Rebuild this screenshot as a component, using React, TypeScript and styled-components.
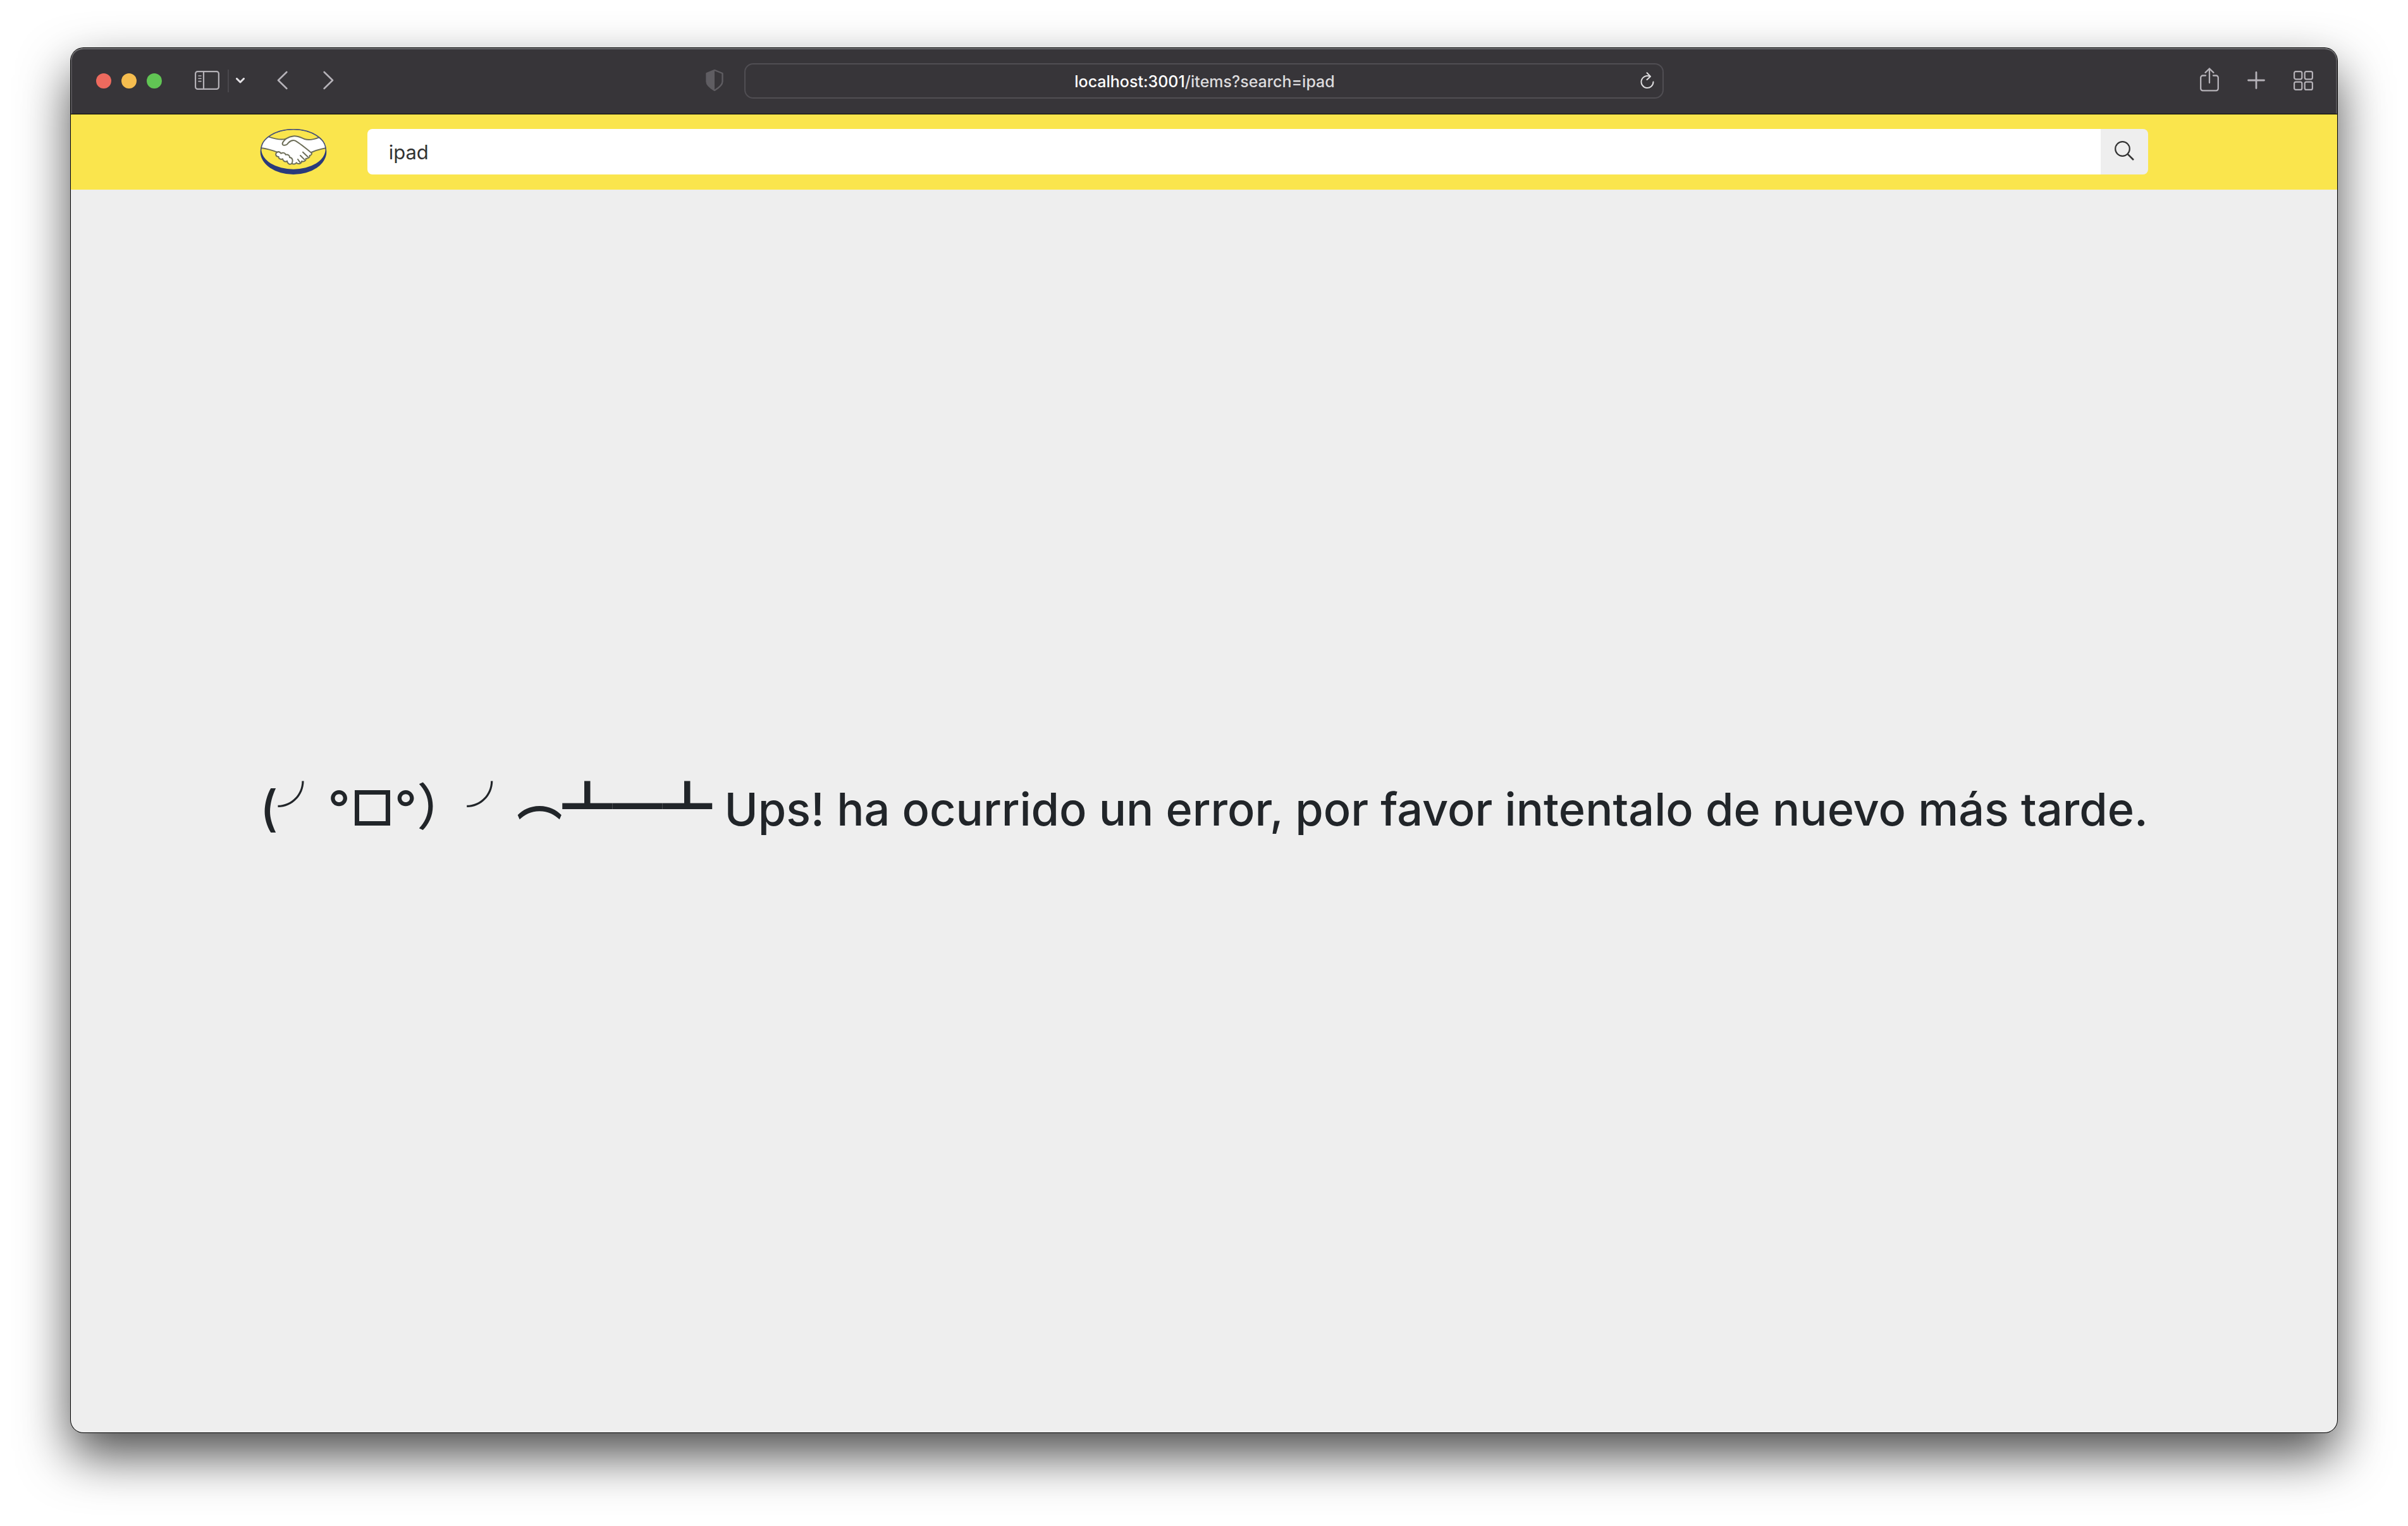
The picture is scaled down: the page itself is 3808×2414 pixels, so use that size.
import React, { useState } from "react";
import styled, { createGlobalStyle } from "styled-components";

const GlobalStyle = createGlobalStyle`
  *, *::before, *::after { box-sizing: border-box; }
  body {
    margin: 0;
    background: #ffffff;
    font-family: Inter, "Liberation Sans", "Noto Sans CJK JP", sans-serif;
  }
`;

const Desktop = styled.div`
  display: flex;
  min-height: 100vh;
  padding: 76px 112px 148px;
`;

const BrowserWindow = styled.div`
  flex: 1;
  min-width: 0;
  display: flex;
  flex-direction: column;
  overflow: hidden;
  border-radius: 20px;
  background: #eeeeee;
  box-shadow: 0 0 0 1px #000000, 0 36px 80px rgba(0, 0, 0, 0.7);
`;

const Toolbar = styled.div`
  display: grid;
  grid-template-columns: 1fr 1454px 1fr;
  align-items: center;
  height: 105px;
  background: #373539;
  border-bottom: 1px solid #000000;
  border-radius: 20px 20px 0 0;
  box-shadow: inset 0 2px 0 #6d6c6f, inset 2px 0 0 #565458, inset -2px 0 0 #565458;
`;

const ToolGroup = styled.div<{ $end?: boolean }>`
  display: flex;
  align-items: center;
  justify-content: ${(p) => (p.$end ? "flex-end" : "flex-start")};
  gap: ${(p) => (p.$end ? "45px" : "0")};
  padding: ${(p) => (p.$end ? "0 38px 0 0" : "0 33px 0 40px")};
`;

const Lights = styled.div`
  display: flex;
  gap: 16px;
  margin-right: 52px;
`;

const Light = styled.button<{ $color: string }>`
  width: 24px;
  height: 24px;
  padding: 0;
  border: 0;
  border-radius: 50%;
  background: ${(p) => p.$color};
`;

const ToolButton = styled.button<{ $tone?: string; $push?: boolean }>`
  display: flex;
  padding: 0 0 2px;
  border: 0;
  background: none;
  color: ${(p) => p.$tone ?? "#b5b2b8"};
  margin-left: ${(p) => (p.$push ? "auto" : "0")};
  svg { display: block; }
`;

const Divider = styled.span`
  width: 2px;
  height: 36px;
  margin: 0 11px 0 13px;
  background: #49474c;
`;

const NavButtons = styled.div`
  display: flex;
  gap: 56px;
  margin-left: 51px;
`;

const AddressBar = styled.div`
  display: grid;
  grid-template-columns: 48px 1fr 48px;
  align-items: center;
  height: 56px;
  border: 2px solid #504e53;
  border-radius: 14px;
  button { grid-column: 3; justify-self: center; }
`;

const Url = styled.div`
  grid-column: 2;
  padding: 2px 0 0 2px;
  text-align: center;
  font-size: 25px;
  line-height: 32px;
  font-weight: 500;
  color: #dddcde;
  b { font-weight: 500; color: #ffffff; }
`;

const Header = styled.header`
  display: grid;
  grid-template-columns: 1fr 10fr 1fr;
  padding: 23px 0 24px;
  background: #fae54d;
`;

const SearchForm = styled.form`
  grid-column: 2;
  display: flex;
  align-items: stretch;
  height: 72px;
`;

const LogoLink = styled.a`
  margin-right: 64px;
  svg { display: block; }
`;

const SearchInput = styled.input`
  flex: 1;
  min-width: 0;
  padding: 2px 34px 0;
  border: 0;
  border-radius: 8px 0 0 8px;
  background: #ffffff;
  color: #333333;
  font-family: inherit;
  font-size: 31px;
  line-height: 40px;
  outline: none;
`;

const SearchButton = styled.button`
  display: flex;
  justify-content: center;
  width: 75px;
  padding: 19px 0 0;
  border: 0;
  border-radius: 0 8px 8px 0;
  background: #eeeeee;
`;

const Main = styled.main`
  flex: 1;
  display: flex;
  align-items: center;
  justify-content: center;
`;

const Message = styled.h1`
  margin: 0 0 16px;
  font-size: 72px;
  line-height: 96px;
  font-weight: 500;
  color: #212529;
  white-space: nowrap;
`;

const Face = styled.span`
  font-size: 77px;
  line-height: 80px;
`;

const Wide = styled.span<{ $weight?: number }>`
  font-family: "Noto Sans CJK JP", sans-serif;
  font-size: 79px;
  line-height: 80px;
  font-weight: ${(p) => p.$weight ?? 500};
`;

const Arc = styled(Wide)`
  display: inline-block;
  font-size: 72px;
  line-height: 72px;
  vertical-align: 16px;
`;

const HandshakeLogo = () => (
  <svg width="106" height="72" viewBox="64 42 318 216" aria-hidden="true">
    <defs>
      <clipPath id="disc">
        <ellipse cx="223" cy="139" rx="153" ry="95" />
      </clipPath>
    </defs>
    <ellipse cx="223" cy="150" rx="157" ry="108" fill="#2a3a7b" />
    <ellipse cx="223" cy="139" rx="152" ry="94" fill="#fae54d" />
    <g clipPath="url(#disc)" stroke="#6d6e58" strokeWidth="6" strokeLinejoin="round" strokeLinecap="round">
      <path
        fill="#ffffff"
        d="M50 128 L75 133 C102 137 124 144 146 152 C134 160 140 174 153 174 C152 184 164 188 172 184 C174 196 186 200 193 194 C195 208 208 214 216 205 C222 212 234 208 237 202 C246 212 262 206 262 195 C272 200 284 192 282 182 C292 184 302 176 300 168 C308 168 312 160 308 153 C332 142 356 136 380 132 L400 130 L345 82 C320 92 296 97 276 90 C258 83 246 75 226 76 C207 77 197 83 187 89 C165 96 132 88 108 80 L50 60 Z"
      />
      <path
        fill="none"
        d="M187 89 C177 98 165 112 174 118 C184 122 194 116 199 108 C208 99 221 94 232 98 C246 106 280 132 308 155"
      />
      <path fill="none" d="M268 152 L291 174 M256 168 L275 187 M244 186 L254 200 M146 152 C154 148 160 152 164 158 C174 152 184 156 186 164 C198 162 206 168 205 177 C218 178 222 190 216 205" />
    </g>
    <path d="M70 139 A153 95 0 0 1 376 139" fill="none" stroke="#4a5478" strokeWidth="5" />
  </svg>
);

const stroke = {
  fill: "none",
  stroke: "currentColor",
  strokeLinecap: "round" as const,
  strokeLinejoin: "round" as const,
};

const SidebarIcon = () => (
  <svg width="39" height="30" viewBox="0 0 39 30" {...stroke} strokeWidth="2.2">
    <rect x="1.1" y="1.1" width="36.8" height="27.8" rx="3.5" />
    <path d="M14 1v28" />
    <path d="M6 8h4M6 12.300h4M6 16.600h4" strokeWidth="1.600" />
  </svg>
);

const ShieldIcon = () => (
  <svg width="28" height="34" viewBox="0 0 28 34">
    <path d="M14 1 L26.500 6 V19 C26.500 25 19 30 14 33 C9 30 1.500 25 1.500 19 V6 Z" fill="none" stroke="currentColor" strokeWidth="2.400" strokeLinejoin="round" />
    <path d="M14 1 V33 C9 30 1.500 25 1.500 19 V6 Z" fill="currentColor" />
  </svg>
);

const ReloadIcon = () => (
  <svg width="22" height="27" viewBox="0 0 22 27" {...stroke} strokeWidth="2">
    <path d="M20.500 15.500 A9.500 9.500 0 1 1 15 6.900" />
    <path d="M10.500 1.200 L16 6.900 L10.500 12" />
  </svg>
);

const App = () => {
  const [query, setQuery] = useState("ipad");

  return (
    <>
      <GlobalStyle />
      <Desktop>
        <BrowserWindow>
          <Toolbar>
            <ToolGroup>
              <Lights>
                <Light $color="#ed6a5e" aria-label="Close" />
                <Light $color="#f5bd4f" aria-label="Minimize" />
                <Light $color="#61c554" aria-label="Zoom" />
              </Lights>
              <ToolButton aria-label="Sidebar">
                <SidebarIcon />
              </ToolButton>
              <Divider />
              <ToolButton aria-label="Tab groups" $tone="#e4e2e6">
                <svg width="14" height="9" viewBox="0 0 14 9" {...stroke} strokeWidth="3">
                  <path d="M1.500 1.500 L7 7 L12.500 1.500" />
                </svg>
              </ToolButton>
              <NavButtons>
                <ToolButton aria-label="Back">
                  <svg width="17" height="30" viewBox="0 0 17 30" {...stroke} strokeWidth="2.600">
                    <path d="M15.300 2 L2 15 L15.300 28" />
                  </svg>
                </ToolButton>
                <ToolButton aria-label="Forward">
                  <svg width="17" height="30" viewBox="0 0 17 30" {...stroke} strokeWidth="2.600">
                    <path d="M1.700 2 L15 15 L1.700 28" />
                  </svg>
                </ToolButton>
              </NavButtons>
              <ToolButton aria-label="Privacy report" $tone="#5f5d62" $push>
                <ShieldIcon />
              </ToolButton>
            </ToolGroup>
            <AddressBar>
              <Url>
                <b>localhost:3001</b>/items?search=ipad
              </Url>
              <ToolButton aria-label="Reload" $tone="#dddcde">
                <ReloadIcon />
              </ToolButton>
            </AddressBar>
            <ToolGroup $end>
              <ToolButton aria-label="Share">
                <svg width="30" height="40" viewBox="0 0 30 40" {...stroke} strokeWidth="2.300">
                  <path d="M9 12.500H4.500A3.300 3.300 0 0 0 1.200 15.800V33A3.300 3.300 0 0 0 4.500 36.300H25.500A3.300 3.300 0 0 0 28.800 33V15.800A3.300 3.300 0 0 0 25.500 12.500H21" />
                  <path d="M15 24V1.500M8.500 7.800L15 1.500L21.500 7.800" />
                </svg>
              </ToolButton>
              <ToolButton aria-label="New tab">
                <svg width="28" height="28" viewBox="0 0 28 28" {...stroke} strokeWidth="2.800">
                  <path d="M14 1.500V26.500M1.500 14H26.500" />
                </svg>
              </ToolButton>
              <ToolButton aria-label="Tab overview">
                <svg width="31" height="31" viewBox="0 0 31 31" {...stroke} strokeWidth="2.200">
                  <rect x="1.100" y="1.100" width="12.200" height="12.200" rx="2.500" />
                  <rect x="17.700" y="1.100" width="12.200" height="12.200" rx="2.500" />
                  <rect x="1.100" y="17.700" width="12.200" height="12.200" rx="2.500" />
                  <rect x="17.700" y="17.700" width="12.200" height="12.200" rx="2.500" />
                </svg>
              </ToolButton>
            </ToolGroup>
          </Toolbar>
          <Header>
            <SearchForm role="search" onSubmit={(e) => e.preventDefault()}>
              <LogoLink href="/" aria-label="Inicio">
                <HandshakeLogo />
              </LogoLink>
              <SearchInput
                aria-label="Buscar"
                value={query}
                onChange={(e) => setQuery(e.target.value)}
              />
              <SearchButton type="submit" aria-label="Buscar">
                <svg width="31" height="31" viewBox="0 0 31 31" fill="none" stroke="#333333" strokeWidth="2.200">
                  <circle cx="12.500" cy="12.500" r="11.300" />
                  <path d="M20.300 20.300 L30 30" strokeWidth="2.600" />
                </svg>
              </SearchButton>
            </SearchForm>
          </Header>
          <Main>
            <Message>
              <Face>(</Face>
              <Wide $weight={400}>╯</Wide>
              <Face>°□°</Face>
              <Wide>）</Wide>
              <Wide $weight={400}>╯</Wide>
              <Arc $weight={700}>︵</Arc>
              <Wide $weight={700}>┻━┻</Wide> Ups! ha ocurrido un error, por favor intentalo de nuevo más tarde.
            </Message>
          </Main>
        </BrowserWindow>
      </Desktop>
    </>
  );
};

export default App;
